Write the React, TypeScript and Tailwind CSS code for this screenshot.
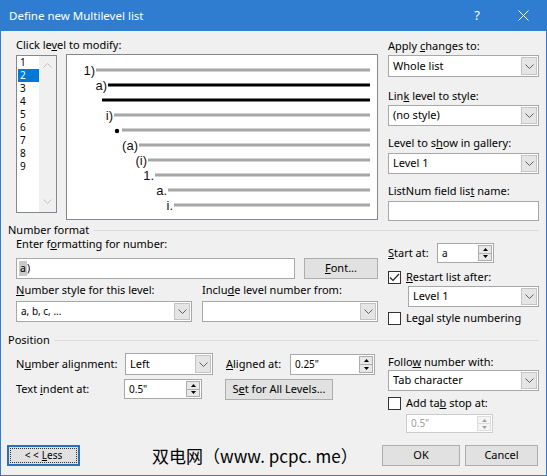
import React from 'react'

type Row = { y: number; x: number; label?: string; black?: boolean; bullet?: boolean }

// preview rows, page coordinates (converted inside the svg)
const previewRows: Row[] = [
  { y: 70, x: 96, label: '1)' },
  { y: 85, x: 108, label: 'a)', black: true },
  { y: 100, x: 102, black: true },
  { y: 115, x: 114, label: 'i)' },
  { y: 130, x: 122, bullet: true },
  { y: 145, x: 139, label: '(a)' },
  { y: 160, x: 148, label: '(i)' },
  { y: 175, x: 155, label: '1.' },
  { y: 190, x: 168, label: 'a.' },
  { y: 205, x: 174, label: 'i.' }
]

const Chevron = ({ color = '#5f5f5f', up = false }: { color?: string; up?: boolean }): React.JSX.Element => (
  <svg width="9" height="5" viewBox="0 0 9 5" fill="none" stroke={color} strokeWidth="1">
    <polyline points={up ? '0.5,4.5 4.5,0.5 8.5,4.5' : '0.5,0.5 4.5,4.5 8.5,0.5'} />
  </svg>
)

const Tri = ({ up = false, color = '#000' }: { up?: boolean; color?: string }): React.JSX.Element => (
  <svg width="5" height="3" viewBox="0 0 5 3">
    <polygon points={up ? '0,3 2.5,0 5,3' : '0,0 5,0 2.5,3'} fill={color} />
  </svg>
)

const Combo = ({
  value,
  className,
  small
}: {
  value: string
  className: string
  small?: boolean
}): React.JSX.Element => (
  <div className={`flex bg-white border border-[#a8a8a8] ${className}`}>
    <div className={`flex-1 flex items-center pl-[4px] ${small ? 'text-[10px]' : ''}`}>{value}</div>
    <div className="w-[16px] my-[1px] mr-[1px] flex items-center justify-center bg-[#e5e5e5] border border-[#c4c4c4]">
      <Chevron />
    </div>
  </div>
)

const Spin = ({
  value,
  className,
  disabled
}: {
  value: string
  className: string
  disabled?: boolean
}): React.JSX.Element => (
  <div
    className={`flex bg-white border ${disabled ? 'border-[#cccccc] text-[#a0a0a0]' : 'border-[#a8a8a8]'} ${className}`}
  >
    <div className="flex-1 flex items-center pl-[4px] text-[10px]">{value}</div>
    <div className="w-[14px] my-[1px] mr-[1px] flex flex-col">
      <div
        className={`flex-1 flex items-center justify-center border ${disabled ? 'bg-[#f4f4f4] border-[#dddddd]' : 'bg-[#e8e8e8] border-[#adadad]'}`}
      >
        <Tri up color={disabled ? '#a0a0a0' : '#000'} />
      </div>
      <div
        className={`flex-1 flex items-center justify-center border border-t-0 ${disabled ? 'bg-[#f4f4f4] border-[#dddddd]' : 'bg-[#e8e8e8] border-[#adadad]'}`}
      >
        <Tri color={disabled ? '#a0a0a0' : '#000'} />
      </div>
    </div>
  </div>
)

const Check = ({ checked }: { checked?: boolean }): React.JSX.Element => (
  <div className="w-[13px] h-[13px] shrink-0 border border-[#333333] bg-white flex items-center justify-center">
    {checked && (
      <svg width="11" height="9" viewBox="0 0 11 9" fill="none" stroke="#222" strokeWidth="1.2">
        <polyline points="1,4.5 4,7.5 10,1" />
      </svg>
    )}
  </div>
)

const Btn = ({ children, className }: { children: React.ReactNode; className: string }): React.JSX.Element => (
  <button className={`flex items-center justify-center bg-[#e1e1e1] border border-[#adadad] ${className}`}>
    {children}
  </button>
)

const Section = ({ title }: { title: string }): React.JSX.Element => (
  <div className="h-[14px] shrink-0 flex items-center pl-[7px] pr-[7px]">
    <span className="leading-[14px]">{title}</span>
    <div className="flex-1 h-px bg-[#dcdcdc] ml-[4px]" />
  </div>
)

export default function App(): React.JSX.Element {
  return (
    <div className="w-[547px] h-[476px] flex flex-col overflow-hidden bg-[#f0f0f0] border-x border-b border-[#2e7dd1] text-[11px] text-black font-['Noto_Sans',sans-serif]">
      {/* title bar */}
      <div className="h-[31px] shrink-0 flex items-center bg-[#2e7dd1] text-white">
        <span className="pl-[8px] text-[11.5px] flex-1">Define new Multilevel list</span>
        <div className="w-[46px] h-full flex items-center justify-center text-[13px]">?</div>
        <div className="w-[46px] h-full flex items-center justify-center">
          <svg width="11" height="11" viewBox="0 0 11 11" stroke="#fff" strokeWidth="1">
            <line x1="0.5" y1="0.5" x2="10.5" y2="10.5" />
            <line x1="10.5" y1="0.5" x2="0.5" y2="10.5" />
          </svg>
        </div>
      </div>

      {/* level list + preview + right column */}
      <div className="h-[192px] shrink-0 flex pl-[15px]">
        <div className="w-[362px] flex flex-col">
          <div className="mt-[7px] h-[14px] leading-[14px]">
            Click le<u>v</u>el to modify:
          </div>
          <div className="mt-[2px] flex items-start">
            <div className="mt-[1px] w-[41px] h-[158px] border border-[#828790] bg-white flex">
              <div className="w-[22px] flex flex-col">
                {[1, 2, 3, 4, 5, 6, 7, 8, 9].map((n) => (
                  <div
                    key={n}
                    className={`h-[13px] leading-[13px] text-[10px] ml-[1px] pl-[2px] ${n === 2 ? 'bg-[#0078d7] text-white' : ''}`}
                  >
                    {n}
                  </div>
                ))}
              </div>
              <div className="flex-1 bg-[#f0f0f0] flex flex-col items-center justify-between pt-[7px] pb-[8px]">
                <Chevron up color="#c2c2c2" />
                <Chevron color="#c2c2c2" />
              </div>
            </div>
            <div className="ml-[9px] w-[312px] h-[166px] border border-[#828790] bg-white">
              <svg width="310" height="164" viewBox="0 0 310 164">
                {previewRows.map((r, i) => (
                  <g key={i}>
                    <line
                      x1={r.x - 67}
                      y1={r.y - 55}
                      x2={303}
                      y2={r.y - 55}
                      stroke={r.black ? '#000' : '#a6a6a6'}
                      strokeWidth="3"
                    />
                    {r.label && (
                      <text
                        x={r.x - 68}
                        y={r.y - 55 + 4.5}
                        textAnchor="end"
                        fontFamily="'Liberation Sans', Arial, sans-serif"
                        fontSize="13"
                        fill="#111"
                      >
                        {r.label}
                      </text>
                    )}
                    {r.bullet && <circle cx={117 - 67} cy={131 - 55} r="2.2" fill="#000" />}
                  </g>
                ))}
              </svg>
            </div>
          </div>
        </div>

        <div className="ml-[10px] w-[151px] flex flex-col">
          <div className="mt-[8px] h-[14px] leading-[14px]">
            Apply <u>c</u>hanges to:
          </div>
          <Combo value="Whole list" className="mt-[2px] h-[22px]" />
          <div className="mt-[12px] h-[14px] leading-[14px]">
            Lin<u>k</u> level to style:
          </div>
          <Combo value="(no style)" className="mt-[2px] h-[21px]" />
          <div className="mt-[10px] h-[14px] leading-[14px]">
            Level to s<u>h</u>ow in gallery:
          </div>
          <Combo value="Level 1" className="mt-[3px] h-[21px]" />
          <div className="mt-[10px] h-[14px] leading-[14px]">
            ListNum field lis<u>t</u> name:
          </div>
          <div className="mt-[3px] h-[20px] bg-white border border-[#a8a8a8]" />
        </div>
      </div>

      <Section title="Number format" />

      <div className="h-[96px] shrink-0 flex pl-[15px]">
        <div className="w-[362px] flex flex-col">
          <div className="h-[14px] leading-[14px]">
            Enter f<u>o</u>rmatting for number:
          </div>
          <div className="mt-[7px] flex">
            <div className="w-[279px] h-[21px] bg-white border border-[#a8a8a8] flex items-center pl-[2px] text-[10.5px]">
              <span className="bg-[#c9c9c9] px-[1px]">a</span>
              <span>)</span>
            </div>
            <Btn className="ml-[9px] w-[74px] h-[21px]">
              <u>F</u>ont...
            </Btn>
          </div>
          <div className="mt-[4px] flex h-[14px] leading-[14px]">
            <div className="w-[186px]">
              <u>N</u>umber style for this level:
            </div>
            <div>
              Inclu<u>d</u>e level number from:
            </div>
          </div>
          <div className="mt-[4px] flex">
            <Combo value="a, b, c, ..." small className="w-[176px] h-[21px]" />
            <Combo value="" className="ml-[10px] w-[176px] h-[21px]" />
          </div>
        </div>

        <div className="ml-[10px] w-[151px] flex flex-col">
          <div className="mt-[6px] h-[20px] flex items-center">
            <div className="w-[49px]">
              <u>S</u>tart at:
            </div>
            <Spin value="a" className="w-[57px] h-[20px]" />
          </div>
          <div className="mt-[7px] h-[14px] flex items-center">
            <Check checked />
            <span className="ml-[5px]">
              <u>R</u>estart list after:
            </span>
          </div>
          <Combo value="Level 1" className="mt-[2px] ml-[20px] h-[21px]" />
          <div className="mt-[4px] h-[14px] flex items-center">
            <Check />
            <span className="ml-[5px]">
              Le<u>g</u>al style numbering
            </span>
          </div>
        </div>
      </div>

      <Section title="Position" />

      <div className="h-[98px] shrink-0 flex pl-[15px]">
        <div className="w-[362px] flex flex-col">
          <div className="mt-[6px] h-[22px] flex items-center">
            <div className="w-[109px]">
              N<u>u</u>mber alignment:
            </div>
            <Combo value="Left" className="w-[88px] h-[22px]" />
            <div className="ml-[13px] w-[64px]">
              <u>A</u>ligned at:
            </div>
            <Spin value={'0.25"'} className="w-[85px] h-[21px]" />
          </div>
          <div className="mt-[3px] h-[22px] flex items-center">
            <div className="w-[108px]">
              Text <u>i</u>ndent at:
            </div>
            <Spin value={'0.5"'} className="w-[78px] h-[20px]" />
            <Btn className="ml-[23px] w-[108px] h-[21px]">
              S<u>e</u>t for All Levels...
            </Btn>
          </div>
        </div>

        <div className="ml-[10px] w-[151px] flex flex-col">
          <div className="mt-[8px] h-[14px] leading-[14px]">
            Follo<u>w</u> number with:
          </div>
          <Combo value="Tab character" className="mt-[1px] h-[21px]" />
          <div className="mt-[5px] h-[14px] flex items-center">
            <Check />
            <span className="ml-[5px]">
              Add ta<u>b</u> stop at:
            </span>
          </div>
          <Spin value={'0.5"'} disabled className="mt-[4px] ml-[18px] w-[87px] h-[19px]" />
        </div>
      </div>

      {/* bottom buttons */}
      <div className="h-[21px] shrink-0 flex items-center pl-[6px] pr-[8px]">
        <button className="w-[73px] h-[21px] border-2 border-[#2a6fb7] bg-[#e1e1e1] p-[1px]">
          <div className="w-full h-full border border-dotted border-[#333] flex items-center justify-center text-[10px]">
            &lt; &lt; <u className="ml-[3px]">L</u>ess
          </div>
        </button>
        <div className="ml-[72px] text-[17px] leading-[21px] font-['Noto_Sans_CJK_SC',sans-serif]">
          双电网（www. pcpc. me）
        </div>
        <Btn className="ml-auto w-[78px] h-[21px]">OK</Btn>
        <Btn className="ml-[5px] w-[73px] h-[21px]">Cancel</Btn>
      </div>
    </div>
  )
}
